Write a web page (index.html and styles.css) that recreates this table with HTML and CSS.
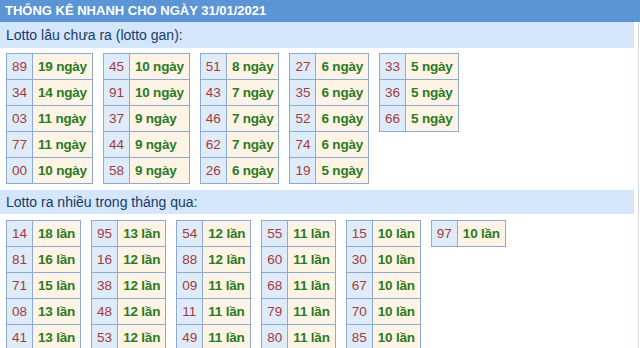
FILE: index.html
```html
<!DOCTYPE html>
<html lang="vi">
<head>
<meta charset="utf-8">
<link rel="stylesheet" href="styles.css">
</head>
<body>
<div class="page">
  <div class="title">THỐNG KÊ NHANH CHO NGÀY 31/01/2021</div>
  <div class="sub">Lotto lâu chưa ra (lotto gan):</div>
  <div class="group g1">
    <table class="lt"><tr><td class="n">89</td><td class="v">19 ngày</td></tr><tr><td class="n">34</td><td class="v">14 ngày</td></tr><tr><td class="n">03</td><td class="v">11 ngày</td></tr><tr><td class="n">77</td><td class="v">11 ngày</td></tr><tr><td class="n">00</td><td class="v">10 ngày</td></tr></table>
    <table class="lt"><tr><td class="n">45</td><td class="v">10 ngày</td></tr><tr><td class="n">91</td><td class="v">10 ngày</td></tr><tr><td class="n">37</td><td class="v">9 ngày</td></tr><tr><td class="n">44</td><td class="v">9 ngày</td></tr><tr><td class="n">58</td><td class="v">9 ngày</td></tr></table>
    <table class="lt"><tr><td class="n">51</td><td class="v">8 ngày</td></tr><tr><td class="n">43</td><td class="v">7 ngày</td></tr><tr><td class="n">46</td><td class="v">7 ngày</td></tr><tr><td class="n">62</td><td class="v">7 ngày</td></tr><tr><td class="n">26</td><td class="v">6 ngày</td></tr></table>
    <table class="lt"><tr><td class="n">27</td><td class="v">6 ngày</td></tr><tr><td class="n">35</td><td class="v">6 ngày</td></tr><tr><td class="n">52</td><td class="v">6 ngày</td></tr><tr><td class="n">74</td><td class="v">6 ngày</td></tr><tr><td class="n">19</td><td class="v">5 ngày</td></tr></table>
    <table class="lt"><tr><td class="n">33</td><td class="v">5 ngày</td></tr><tr><td class="n">36</td><td class="v">5 ngày</td></tr><tr><td class="n">66</td><td class="v">5 ngày</td></tr></table>
  </div>
  <div class="sub sub2">Lotto ra nhiều trong tháng qua:</div>
  <div class="group g2">
    <table class="lt"><tr><td class="n">14</td><td class="v">18 lần</td></tr><tr><td class="n">81</td><td class="v">16 lần</td></tr><tr><td class="n">71</td><td class="v">15 lần</td></tr><tr><td class="n">08</td><td class="v">13 lần</td></tr><tr><td class="n">41</td><td class="v">13 lần</td></tr></table>
    <table class="lt"><tr><td class="n">95</td><td class="v">13 lần</td></tr><tr><td class="n">16</td><td class="v">12 lần</td></tr><tr><td class="n">38</td><td class="v">12 lần</td></tr><tr><td class="n">48</td><td class="v">12 lần</td></tr><tr><td class="n">53</td><td class="v">12 lần</td></tr></table>
    <table class="lt"><tr><td class="n">54</td><td class="v">12 lần</td></tr><tr><td class="n">88</td><td class="v">12 lần</td></tr><tr><td class="n">09</td><td class="v">11 lần</td></tr><tr><td class="n">11</td><td class="v">11 lần</td></tr><tr><td class="n">49</td><td class="v">11 lần</td></tr></table>
    <table class="lt"><tr><td class="n">55</td><td class="v">11 lần</td></tr><tr><td class="n">60</td><td class="v">11 lần</td></tr><tr><td class="n">68</td><td class="v">11 lần</td></tr><tr><td class="n">79</td><td class="v">11 lần</td></tr><tr><td class="n">80</td><td class="v">11 lần</td></tr></table>
    <table class="lt"><tr><td class="n">15</td><td class="v">10 lần</td></tr><tr><td class="n">30</td><td class="v">10 lần</td></tr><tr><td class="n">67</td><td class="v">10 lần</td></tr><tr><td class="n">70</td><td class="v">10 lần</td></tr><tr><td class="n">85</td><td class="v">10 lần</td></tr></table>
    <table class="lt"><tr><td class="n">97</td><td class="v">10 lần</td></tr></table>
  </div>
</div>
</body>
</html>
```

FILE: styles.css
```css
html, body {
  margin: 0;
  padding: 0;
  background: #ffffff;
}
.page {
  width: 638px;
  border-right: 1px solid #d4d9e0;
  font-family: "Liberation Sans", Arial, sans-serif;
  min-height: 348px;
}
.title {
  width: 640px;
  height: 22px;
  line-height: 22px;
  background: #5b95d5;
  color: #ffffff;
  font-weight: bold;
  font-size: 13px;
  padding-left: 5px;
  box-sizing: border-box;
}
.sub {
  margin-right: 4px;
  height: 26px;
  line-height: 26px;
  background: #d4e6f9;
  color: #183a6e;
  font-size: 14px;
  padding-left: 6px;
}
.sub2 {
  height: 24px;
  line-height: 24px;
}
.group {
  display: flex;
  align-items: flex-start;
  gap: 10px;
  padding-left: 6px;
}
.g1 {
  margin: 5px 0 6px;
}
.g2 {
  margin: 6px 0 0;
}
.lt {
  border-collapse: collapse;
  font-size: 13.5px;
}
.lt td {
  border: 1px solid #8ea9d2;
  height: 26px;
  padding: 0 5px;
  box-sizing: border-box;
  white-space: nowrap;
}
.lt .n {
  background: #deebf9;
  color: #a43a3a;
}
.lt .v {
  background: #fdf4e6;
  color: #2b7a1f;
  font-weight: bold;
  letter-spacing: -0.2px;
}
```
